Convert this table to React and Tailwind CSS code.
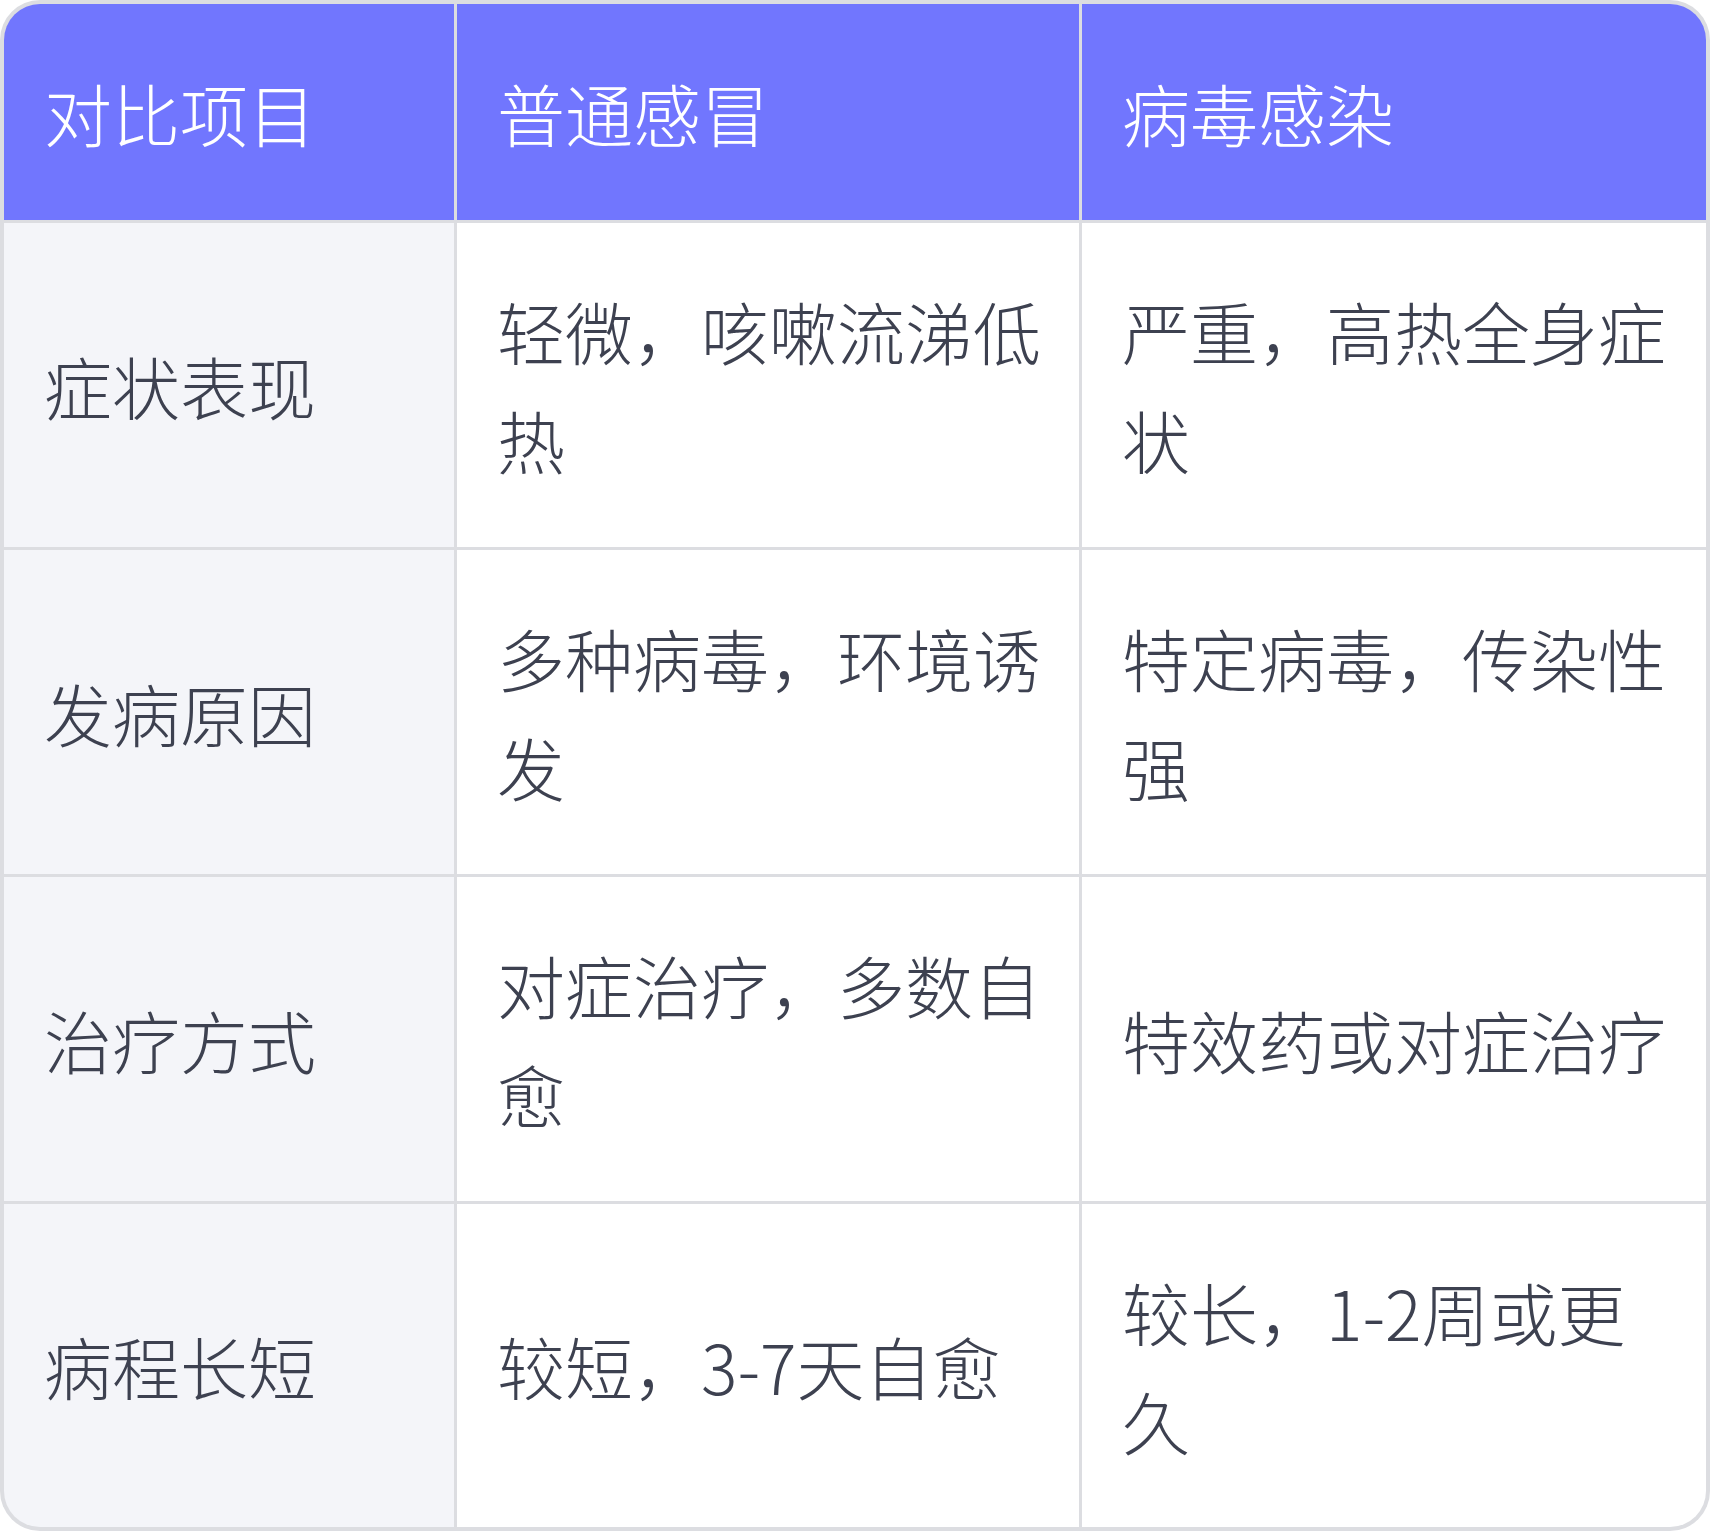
import React from "react";

// 对比表数据
const headers = ["对比项目", "普通感冒", "病毒感染"];
const rows = [
  ["症状表现", "轻微，咳嗽流涕低热", "严重，高热全身症状"],
  ["发病原因", "多种病毒，环境诱发", "特定病毒，传染性强"],
  ["治疗方式", "对症治疗，多数自愈", "特效药或对症治疗"],
  ["病程长短", "较短，3-7天自愈", "较长，1-2周或更久"],
];

const font = { fontFamily: '"Noto Sans CJK SC", "Noto Sans", sans-serif' };

export default function App() {
  return (
    <div className="w-[1710px] h-[1531px] bg-white" style={font}>
      <div className="w-full h-full bg-[#dcdde1] rounded-[40px] p-[4px]">
        <div className="grid h-full grid-cols-[450px_622px_624px] grid-rows-[216px_324px_324px_324px_323px] gap-[3px] rounded-[36px] overflow-hidden">
          {headers.map((h) => (
            <div key={h} className="bg-[#7176fe] flex items-center pl-[40px] pr-[34px] text-white text-[68px] leading-[109px] font-extralight">
              {h}
            </div>
          ))}
          {rows.map((r) =>
            r.map((c, i) => (
              <div
                key={r[0] + i}
                className={`flex items-center pl-[40px] pr-[34px] text-[#3d4150] text-[68px] leading-[109px] font-extralight ${i === 0 ? "bg-[#f4f5f9]" : "bg-white"}`}
              >
                <span>{c}</span>
              </div>
            ))
          )}
        </div>
      </div>
    </div>
  );
}
